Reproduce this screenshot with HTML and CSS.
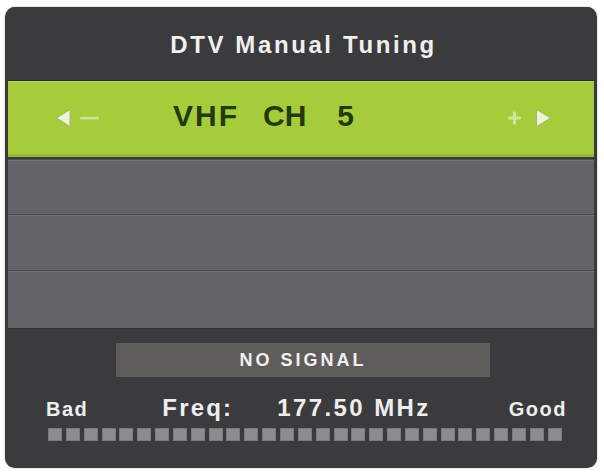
FILE: index.html
```html
<!DOCTYPE html>
<html>
<head>
<meta charset="utf-8">
<link rel="stylesheet" href="styles.css">
</head>
<body>
<div class="panel">
  <div class="header"><span class="title">DTV Manual Tuning</span></div>
  <div class="tuner">
    <svg class="ctrl-left" width="46" height="18" viewBox="0 0 46 18">
      <polygon points="14,0.5 14,17.5 0.8,9" fill="#eef4da" stroke="#a3b874" stroke-width="1"/>
      <rect x="24" y="7.8" width="19" height="2.6" rx="1" fill="#cfe19a"/>
    </svg>
    <div class="channel"><span class="band">VHF</span><span class="ch">CH</span><span class="num">5</span></div>
    <svg class="ctrl-right" width="44" height="18" viewBox="0 0 44 18">
      <rect x="0" y="7.6" width="13" height="3" rx="1" fill="#d2e39e"/>
      <rect x="5" y="2.5" width="3" height="13" rx="1" fill="#d2e39e"/>
      <polygon points="28.5,0.5 28.5,17.5 42.5,9" fill="#eef4da" stroke="#a3b874" stroke-width="1"/>
    </svg>
  </div>
  <div class="rows">
    <div class="row row1"></div>
    <div class="row row2"></div>
    <div class="row row3"></div>
  </div>
  <div class="bottom">
    <div class="status">NO SIGNAL</div>
    <div class="labels">
      <span class="bad">Bad</span>
      <span class="freq">Freq:</span>
      <span class="value">177.50 MHz</span>
      <span class="good">Good</span>
    </div>
    <div class="meter">
      <i></i><i></i><i></i><i></i><i></i><i></i><i></i><i></i><i></i><i></i>
      <i></i><i></i><i></i><i></i><i></i><i></i><i></i><i></i><i></i><i></i>
      <i></i><i></i><i></i><i></i><i></i><i></i><i></i><i></i><i></i>
    </div>
  </div>
</div>
</body>
</html>
```
FILE: styles.css
```css
* { box-sizing: border-box; }
html, body { margin: 0; padding: 0; background: #ffffff; }
body { width: 604px; height: 473px; overflow: hidden; font-family: "Liberation Sans", Arial, sans-serif; }

.panel {
  margin: 7px 0 0 5px;
  width: 592px;
  height: 461px;
  border-radius: 10px;
  background: #3a3a3c;
  padding: 0 3px;
  overflow: hidden;
  box-shadow: 0 0 2px rgba(0,0,0,0.35);
}

.header {
  height: 74px;
  padding-top: 24px;
  text-align: center;
  background: #3b3b3d;
  border-bottom: 1px solid #2c2c2c;
}
.title {
  font-weight: bold;
  font-size: 24px;
  line-height: 28px;
  letter-spacing: 2.6px;
  color: #f0f0f0;
  margin-left: 5px;
}

.tuner {
  height: 76px;
  display: flex;
  align-items: center;
  background: #a7cc3b;
  box-shadow: inset 0 -3px 0 #96b933, inset 0 1px 0 #b6d653;
  padding-bottom: 2px;
}
.ctrl-left { margin-left: 48px; flex: none; }
.channel {
  margin-left: 71px;
  display: flex;
  align-items: baseline;
  font-weight: bold;
  font-size: 30px;
  line-height: 34px;
  color: #213b0d;
  padding-bottom: 5px;
}
.band { letter-spacing: 2px; }
.ch { margin-left: 24px; }
.num { margin-left: 31px; }
.ctrl-right { margin-left: auto; margin-right: 42px; flex: none; }

.rows { padding-top: 2px; background: #3a3a3c; }
.row {
  background: #646468;
  border-top: 1px solid #4a4a4e;
  box-shadow: inset 0 1px 0 #737377;
}
.row1 { height: 55px; border-top-color: #505054; }
.row2 { height: 56px; }
.row3 { height: 58px; }

.bottom {
  height: 139px;
  padding-top: 14px;
  background: #3b3b3d;
  border-top: 1px solid #343436;
}
.status {
  margin-left: 108px;
  width: 374px;
  height: 34px;
  padding-top: 1px;
  background: #5f5c5c;
  color: #f0f0f0;
  font-weight: bold;
  font-size: 18px;
  line-height: 33px;
  letter-spacing: 3px;
  text-align: center;
}
.labels {
  display: flex;
  align-items: baseline;
  margin-top: 19px;
  color: #eeeeee;
  font-weight: bold;
}
.bad { margin-left: 38px; font-size: 20px; line-height: 24px; letter-spacing: 1.5px; }
.freq { margin-left: 74px; font-size: 24px; line-height: 24px; letter-spacing: 2.2px; }
.value { margin-left: 44px; font-size: 24px; line-height: 24px; letter-spacing: 2.4px; }
.good { margin-left: auto; margin-right: 27px; font-size: 20px; line-height: 24px; letter-spacing: 1.5px; }

.meter {
  margin: 7px 0 0 40px;
  width: 514px;
  height: 13px;
  display: flex;
  justify-content: space-between;
}
.meter i {
  display: block;
  width: 14px;
  height: 13px;
  background: #8c8c8f;
  box-shadow: inset 0 0 0 1px #7a7a7d;
}
```
